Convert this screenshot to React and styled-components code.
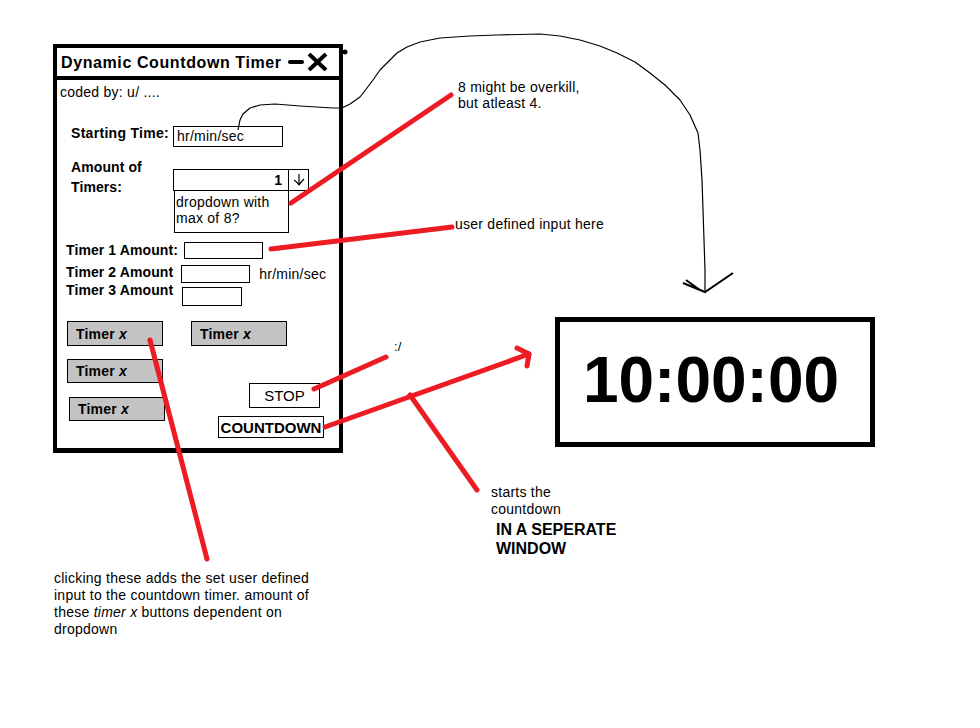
import React from 'react';
import styled, { createGlobalStyle } from 'styled-components';

const GlobalStyle = createGlobalStyle`
  html, body {
    margin: 0;
    padding: 0;
    background: #fff;
  }
  body {
    font-family: 'Liberation Sans', Arial, sans-serif;
    color: #000;
  }
`;

const RED = '#ed1c24';

const Canvas = styled.div`
  position: relative;
  width: 980px;
  height: 728px;
  overflow: hidden;
  background: #fff;
`;

/* the mock app window */
const Window = styled.div`
  position: absolute;
  left: 53px;
  top: 44px;
  width: 290px;
  height: 409px;
  box-sizing: border-box;
  border: 4px solid #000;
  border-bottom-width: 5px;
  display: flex;
  flex-direction: column;
`;

const TitleBar = styled.div`
  height: 28px;
  border-bottom: 4px solid #000;
  display: flex;
  align-items: center;
  padding-left: 4px;
`;

const Title = styled.div`
  font-weight: bold;
  font-size: 16px;
  letter-spacing: 0.6px;
  padding-top: 2px;
`;

const Controls = styled.div`
  margin-left: auto;
  padding-right: 11px;
  display: flex;
  align-items: center;
  gap: 3px;
`;

const Body = styled.div`
  padding-top: 4px;
  display: flex;
  flex-direction: column;
`;

const Coded = styled.div`
  margin-left: 3px;
  font-size: 14px;
  line-height: 16px;
  letter-spacing: 0.25px;
`;

const Row = styled.div`
  display: flex;
  align-items: flex-start;
  margin-top: ${({ $mt }) => $mt || 0}px;
  margin-left: ${({ $ml }) => $ml || 0}px;
`;

const Label = styled.div`
  font-weight: bold;
  font-size: 14px;
  line-height: ${({ $lh }) => $lh || 16}px;
  letter-spacing: ${({ $ls }) => $ls || 0.1}px;
  width: ${({ $w }) => ($w ? `${$w}px` : 'auto')};
  flex-shrink: 0;
  white-space: nowrap;
`;

const Field = styled.div`
  box-sizing: border-box;
  border: 1px solid #000;
  width: ${({ $w }) => $w}px;
  height: ${({ $h }) => $h}px;
  margin-top: ${({ $mt }) => $mt || 0}px;
  margin-left: ${({ $ml }) => $ml || 0}px;
  font-size: 14px;
  letter-spacing: 0.25px;
  line-height: ${({ $h }) => $h - 2}px;
  padding-left: 3px;
`;

const Hint = styled.div`
  font-size: 14px;
  line-height: 16px;
  letter-spacing: 0.25px;
  margin-top: ${({ $mt }) => $mt || 0}px;
  margin-left: ${({ $ml }) => $ml || 0}px;
`;

const DropCol = styled.div`
  margin-top: 12px;
  display: flex;
  flex-direction: column;
`;

const Select = styled.div`
  display: flex;
`;

const SelectValue = styled.div`
  box-sizing: border-box;
  width: 116px;
  height: 22px;
  border: 1px solid #000;
  font-weight: bold;
  font-size: 14px;
  line-height: 20px;
  text-align: right;
  padding-right: 6px;
`;

const SelectArrow = styled.div`
  box-sizing: border-box;
  width: 20px;
  height: 22px;
  border: 1px solid #000;
  border-left: none;
  display: flex;
  align-items: center;
  justify-content: center;
`;

const DropList = styled.div`
  box-sizing: border-box;
  width: 115px;
  height: 42px;
  margin-left: 1px;
  border: 1px solid #000;
  border-top: none;
  padding: 3px 0 0 1px;
  font-size: 14px;
  line-height: 16px;
  letter-spacing: 0.25px;
`;

const ButtonArea = styled.div`
  margin-top: 15px;
  margin-left: 10px;
  display: flex;
  gap: 26px;
`;

const Column = styled.div`
  display: flex;
  flex-direction: column;
  width: ${({ $w }) => ($w ? `${$w}px` : 'auto')};
`;

const TimerButton = styled.div`
  box-sizing: border-box;
  width: 96px;
  height: ${({ $h }) => $h || 24}px;
  margin-top: ${({ $mt }) => $mt || 0}px;
  margin-left: ${({ $ml }) => $ml || 0}px;
  background: #c3c3c3;
  border: 1px solid #000;
  display: flex;
  align-items: center;
  padding-left: 8px;
  font-weight: bold;
  font-size: 14px;
  letter-spacing: 0.2px;
`;

const PlainButton = styled.div`
  box-sizing: border-box;
  align-self: flex-end;
  width: ${({ $w }) => $w}px;
  height: ${({ $h }) => $h}px;
  margin-top: ${({ $mt }) => $mt || 0}px;
  margin-right: ${({ $mr }) => $mr || 0}px;
  border: 1px solid #000;
  background: #fff;
  display: flex;
  align-items: center;
  justify-content: center;
  font-size: 15px;
  font-weight: ${({ $bold }) => ($bold ? 'bold' : 'normal')};
`;

/* the separate countdown window */
const Display = styled.div`
  position: absolute;
  left: 555px;
  top: 317px;
  width: 320px;
  height: 130px;
  box-sizing: border-box;
  border: 5px solid #000;
  display: flex;
  align-items: center;
  justify-content: center;
  padding: 0 8px 4px 0;
  font-weight: bold;
  font-size: 64px;
`;

/* free-floating sketch notes */
const Note = styled.div`
  position: absolute;
  left: ${({ $x }) => $x}px;
  top: ${({ $y }) => $y}px;
  font-size: ${({ $size }) => $size || 14}px;
  line-height: ${({ $lh }) => $lh || 16}px;
  font-weight: ${({ $bold }) => ($bold ? 'bold' : 'normal')};
  letter-spacing: ${({ $bold }) => ($bold ? 0 : 0.25)}px;
  white-space: nowrap;
`;

const Overlay = styled.svg`
  position: absolute;
  left: 0;
  top: 0;
  pointer-events: none;
`;

const curve = [
  [238, 130], [240, 120], [243, 114], [250, 108], [260, 105], [275, 104], [300, 106],
  [333, 108], [342, 108], [350, 104], [360, 97], [367, 88], [373, 80], [380, 70],
  [387, 63], [397, 53], [407, 47], [420, 42], [440, 38], [470, 36], [497, 35],
  [540, 34], [560, 36], [580, 40], [600, 46], [617, 53], [635, 62], [650, 73],
  [665, 85], [680, 100], [690, 115], [698, 133], [700, 150], [702, 180], [703, 210],
  [704, 240], [705, 270], [705, 291],
];

const redLines = [
  'M291 203 L451 95',
  'M271 249 L452 227',
  'M150 340 L207 559',
  'M314 389 L386 357',
  'M325 427 L529 354',
  'M517 348 L529 354 L527 366',
  'M410 395 L477 490',
];

const TimerX = ({ h, mt, ml }) => (
  <TimerButton $h={h} $mt={mt} $ml={ml}>
    Timer&nbsp;<em>x</em>
  </TimerButton>
);

const App = () => (
  <Canvas>
    <GlobalStyle />

    <Window>
      <TitleBar>
        <Title>Dynamic Countdown Timer</Title>
        <Controls>
          <svg width="16" height="6" viewBox="0 0 16 6">
            <line x1="2" y1="3" x2="14" y2="3" stroke="#000" strokeWidth="4" strokeLinecap="round" />
          </svg>
          <svg width="21" height="18" viewBox="0 0 21 18">
            <path d="M2 1 L19 17 M19 1 L2 17" stroke="#000" strokeWidth="4" />
          </svg>
        </Controls>
      </TitleBar>

      <Body>
        <Coded>coded by: u/ ....</Coded>

        <Row $mt={25} $ml={14}>
          <Label $w={102} $ls={0.3}>Starting Time:</Label>
          <Field $w={110} $h={21} $mt={1}>hr/min/sec</Field>
        </Row>

        <Row $mt={10} $ml={14}>
          <Label $w={102} $lh={20}>
            Amount of
            <br />
            Timers:
          </Label>
          <DropCol>
            <Select>
              <SelectValue>1</SelectValue>
              <SelectArrow>
                <svg width="14" height="14" viewBox="0 0 14 14">
                  <path d="M7 1 L7 12 M2 7 Q5 9 7 12 Q9 9 12 6" stroke="#000" strokeWidth="1.2" fill="none" />
                </svg>
              </SelectArrow>
            </Select>
            <DropList>
              dropdown with
              <br />
              max of 8?
            </DropList>
          </DropCol>
        </Row>

        <Row $mt={9} $ml={9}>
          <Label>Timer 1 Amount:</Label>
          <Field $w={79} $h={17} $ml={6} />
        </Row>
        <Row $mt={5} $ml={9}>
          <Label>Timer 2 Amount</Label>
          <Field $w={69} $h={18} $mt={1} $ml={8} />
          <Hint $mt={2} $ml={9}>hr/min/sec</Hint>
        </Row>
        <Row $mt={-1} $ml={9}>
          <Label>Timer 3 Amount</Label>
          <Field $w={60} $h={19} $mt={5} $ml={9} />
        </Row>

        <ButtonArea>
          <Column>
            <TimerX h={25} />
            <TimerX mt={13} />
            <TimerX mt={14} ml={2} />
          </Column>
          <Column $w={133}>
            <TimerX h={25} />
            <PlainButton $w={71} $h={25} $mt={37} $mr={4}>STOP</PlainButton>
            <PlainButton $w={106} $h={22} $mt={8} $bold>COUNTDOWN</PlainButton>
          </Column>
        </ButtonArea>
      </Body>
    </Window>

    <Display>10:00:00</Display>

    <Note $x={458} $y={79}>
      8 might be overkill,
      <br />
      but atleast 4.
    </Note>
    <Note $x={455} $y={216}>user defined input here</Note>
    <Note $x={394} $y={339} $size={13}>:/</Note>
    <Note $x={491} $y={484} $lh={17}>
      starts the
      <br />
      countdown
    </Note>
    <Note $x={496} $y={520} $size={16} $lh={19} $bold>
      IN A SEPERATE
      <br />
      WINDOW
    </Note>
    <Note $x={54} $y={570} $lh={17}>
      clicking these adds the set user defined
      <br />
      input to the countdown timer. amount of
      <br />
      these <i>timer x</i> buttons dependent on
      <br />
      dropdown
    </Note>

    <Overlay width="980" height="728" viewBox="0 0 980 728">
      <circle cx="345" cy="52" r="2.5" fill="#000" />
      <polyline
        points={curve.map((p) => p.join(',')).join(' ')}
        fill="none"
        stroke="#000"
        strokeWidth="1.2"
        strokeLinejoin="round"
      />
      <path d="M683 283 L705 292 L733 273 M686 280 L700 290" fill="none" stroke="#000" strokeWidth="2" />
      {redLines.map((d) => (
        <path key={d} d={d} fill="none" stroke={RED} strokeWidth="5" strokeLinecap="round" strokeLinejoin="round" />
      ))}
    </Overlay>
  </Canvas>
);

export default App;
